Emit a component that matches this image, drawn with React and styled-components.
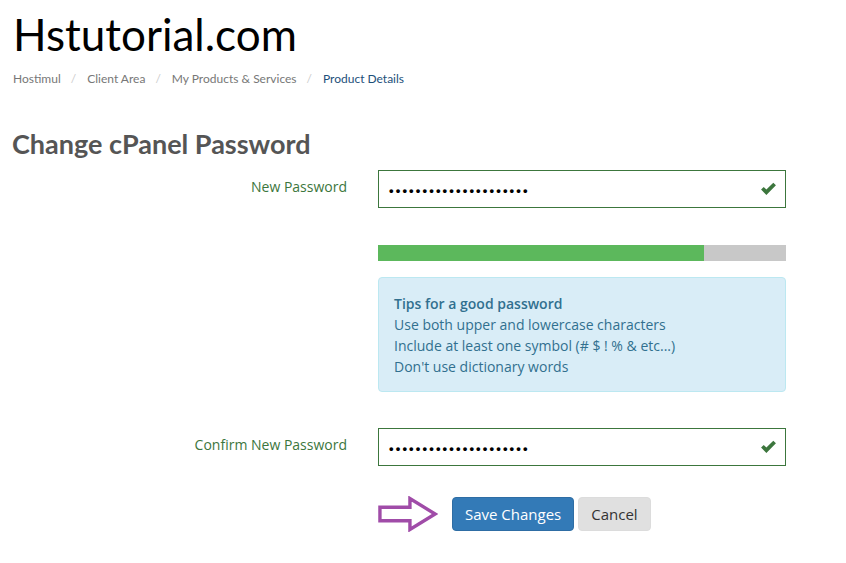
import React from 'react'
import styled, { createGlobalStyle } from 'styled-components'

const GlobalStyle = createGlobalStyle`
  body {
    margin: 0;
    background: #fff;
    font-family: "Open Sans", "Noto Sans", sans-serif;
    font-size: 14px;
    color: #333;
  }
`

const Page = styled.div`
  padding: 0 12px 30px 12px;
`

const SiteTitle = styled.h1`
  font-family: Lato, sans-serif;
  font-weight: 400;
  font-size: 44px;
  line-height: 1;
  margin: 12px 0 0 1px;
  color: #000;
`

const Crumbs = styled.ol`
  display: flex;
  list-style: none;
  margin: 15px 0 0 1px;
  padding: 0;
  font-family: Lato, sans-serif;
  font-size: 12px;
  color: #777;
`

const Crumb = styled.li`
  color: ${p => (p.$active ? '#1d4f7a' : '#777')};
  &:not(:first-child)::before {
    content: '/';
    color: #ccc;
    padding: 0 11px 0 10px;
  }
`

const Heading = styled.h2`
  font-family: Lato, sans-serif;
  font-weight: 700;
  font-size: 27px;
  color: #555;
  margin: 42px 0 0 0;
  line-height: 1.2;
`

const Form = styled.form`
  display: grid;
  grid-template-columns: 335px 408px;
  column-gap: 31px;
  margin-top: 10px;
`

const Label = styled.label`
  grid-column: 1;
  text-align: right;
  color: #3c763d;
  font-size: 14px;
  line-height: 34px;
  height: 38px;
`

const Field = styled.div`
  grid-column: 2;
  position: relative;
  height: 38px;
  box-sizing: border-box;
  border: 1px solid #3c763d;
  display: flex;
  align-items: center;
  padding: 0 10px;
  background: #fff;
`

const Dots = styled.span`
  font-family: "Liberation Sans", sans-serif;
  font-size: 13px;
  letter-spacing: 2.15px;
  color: #000;
  font-weight: 700;
  margin-top: 2px;
`

const Check = styled.svg`
  position: absolute;
  right: 8px;
  top: 10px;
`

const Strength = styled.div`
  grid-column: 2;
  height: 16px;
  margin-top: 37px;
  background: #c8c8c8;
  display: flex;
`

const StrengthFill = styled.div`
  background: #5cb85c;
  height: 100%;
`

const Tips = styled.div`
  grid-column: 2;
  margin-top: 16px;
  background: #d9edf7;
  border: 1px solid #bce8f1;
  border-radius: 4px;
  color: #31708f;
  padding: 15px 15px 14px 15px;
  line-height: 21px;
  font-size: 14px;
  height: 115px;
  box-sizing: border-box;
`

const TipsTitle = styled.strong`
  display: block;
  font-weight: 600;
`

const Spacer = styled.div`
  grid-column: 1 / -1;
  height: ${p => p.$h}px;
`

const Actions = styled.div`
  grid-column: 2;
  display: flex;
  align-items: center;
  gap: 4px;
`

const Arrow = styled.svg`
  margin-right: 10px;
`

const Button = styled.button`
  font-family: inherit;
  font-size: 15px;
  height: 34px;
  padding: 0 12px;
  border-radius: 4px;
  cursor: pointer;
  border: 1px solid ${p => (p.$primary ? '#2e6da4' : '#dcdcdc')};
  background: ${p => (p.$primary ? '#337ab7' : '#e0e0e0')};
  color: ${p => (p.$primary ? '#fff' : '#333')};
`

const CheckIcon = () => (
  <Check width="17" height="15" viewBox="0 0 16 14">
    <path d="M1 8 L3.5 5.5 L6 8 L12.5 1.5 L15 4 L6 13 Z" fill="#3c763d" />
  </Check>
)

const PasswordField = () => (
  <Field>
    <Dots>•••••••••••••••••••••</Dots>
    <CheckIcon />
  </Field>
)

export default function App() {
  return (
    <Page>
      <GlobalStyle />
      <SiteTitle>Hstutorial.com</SiteTitle>
      <Crumbs>
        <Crumb>Hostimul</Crumb>
        <Crumb>Client Area</Crumb>
        <Crumb>My Products &amp; Services</Crumb>
        <Crumb $active>Product Details</Crumb>
      </Crumbs>
      <Heading>Change cPanel Password</Heading>
      <Form onSubmit={e => e.preventDefault()}>
        <Label>New Password</Label>
        <PasswordField />
        <Strength>
          <StrengthFill style={{ width: '80%' }} />
        </Strength>
        <Tips>
          <TipsTitle>Tips for a good password</TipsTitle>
          Use both upper and lowercase characters<br />
          Include at least one symbol (# $ ! % &amp; etc...)<br />
          Don't use dictionary words
        </Tips>
        <Spacer $h={36} />
        <Label>Confirm New Password</Label>
        <PasswordField />
        <Spacer $h={30} />
        <Actions>
          <Arrow width="60" height="36" viewBox="0 0 62 36">
            <path
              d="M2 11 H33 V2 L59 18 L33 34 V25 H2 Z"
              fill="none"
              stroke="#a04ca8"
              strokeWidth="3.5"
              strokeLinejoin="miter"
            />
          </Arrow>
          <Button $primary>Save Changes</Button>
          <Button type="button">Cancel</Button>
        </Actions>
      </Form>
    </Page>
  )
}
